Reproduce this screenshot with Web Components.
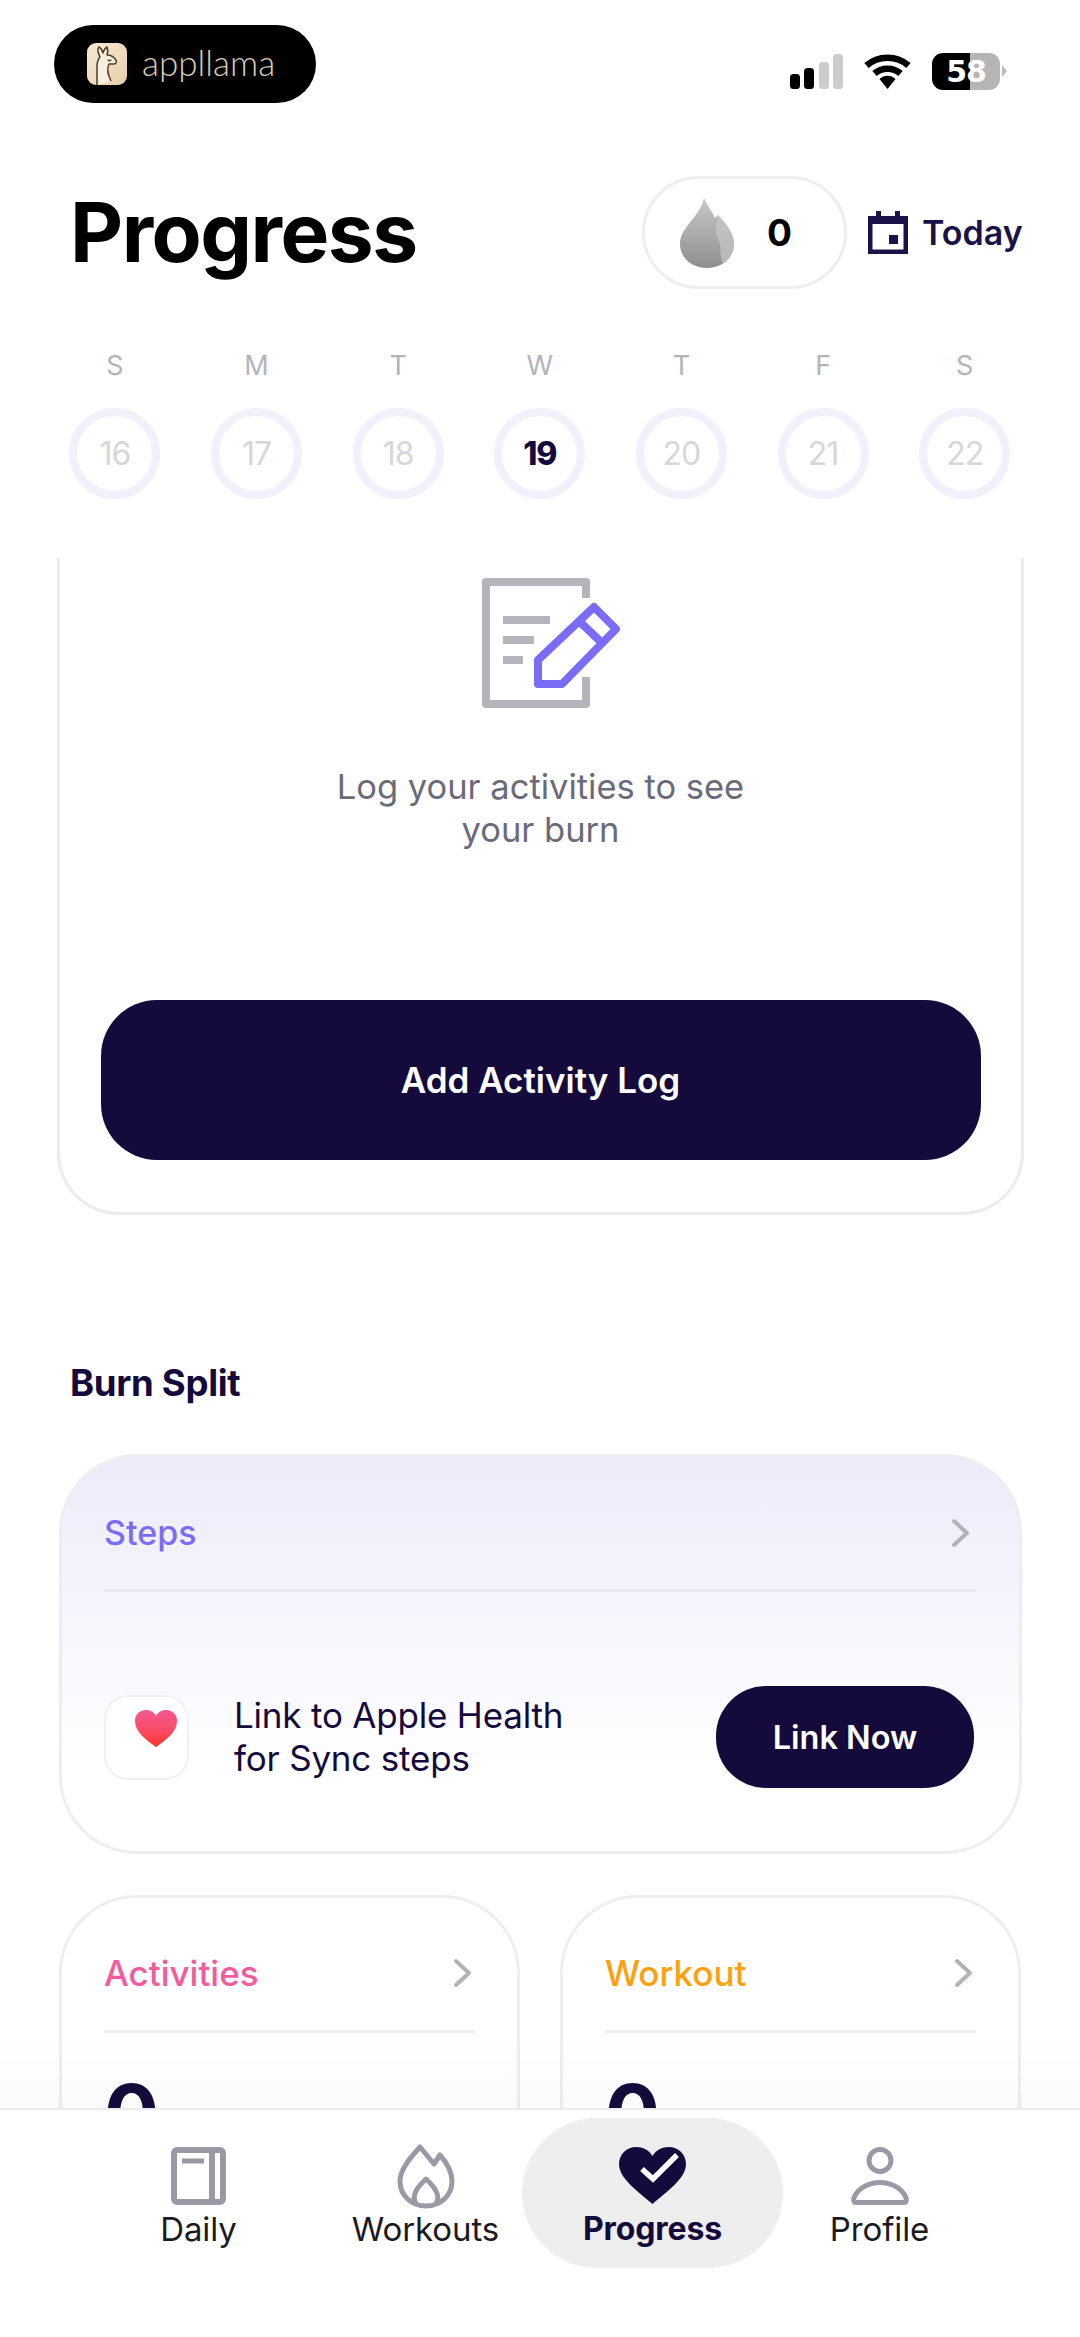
<!DOCTYPE html>
<html lang="en">
<head>
<meta charset="utf-8">
<title>Progress</title>
<style>
  html, body { margin: 0; padding: 0; background: #fff; }
  body {
    width: 1080px;
    height: 2337px;
    overflow: hidden;
    display: flex;
    flex-direction: column;
    font-family: 'Inter', 'Noto Sans', sans-serif;
    color: #140b3c;
  }
</style>
</head>
<body>
  <status-bar></status-bar>
  <page-header>Progress</page-header>
  <week-strip></week-strip>
  <scroll-view>
    <activity-log-card></activity-log-card>
    <section-title>Burn Split</section-title>
    <steps-card></steps-card>
    <div style="display:grid;grid-template-columns:461px 461px;gap:40px;margin:41px 59px 0">
      <stat-card color="#f25c9c">Activities</stat-card>
      <stat-card color="#ff9f0f">Workout</stat-card>
    </div>
  </scroll-view>
  <bottom-nav></bottom-nav>

<script>
const chevron = `<svg width="20" height="30" viewBox="0 0 20 30"><path d="M3 3l13 12L3 27" fill="none" stroke="#b2b2ba" stroke-width="4" stroke-linecap="round" stroke-linejoin="round"/></svg>`

const statusTemplate = document.createElement('template')
statusTemplate.innerHTML = `
  <style>
    :host { display: flex; justify-content: space-between; height: 125px; box-sizing: border-box; padding: 25px 80px 0 54px; }
    .pill {
      display: flex;
      align-items: center;
      gap: 15px;
      box-sizing: border-box;
      width: 262px;
      height: 78px;
      padding-left: 33px;
      border-radius: 39px;
      background: #000;
      color: #d9cdb8;
      font-family: 'Lato', sans-serif;
      font-size: 35px;
      font-weight: 300;
    }
    .pill span { position: relative; top: -2px; }
    .icons { display: flex; align-items: center; height: 37px; margin-top: 28px; gap: 21px; }
    .battery {
      width: 68px;
      height: 37px;
      border-radius: 11px;
      background: linear-gradient(90deg, #000 56%, #b5b5b5 56%);
      color: #fff;
      font: 700 30px/37px 'DejaVu Sans', sans-serif;
      letter-spacing: -1px;
      text-align: center;
      position: relative;
    }
    .battery::after {
      content: '';
      position: absolute;
      left: 70px;
      top: 12px;
      border-left: 5px solid #bbb;
      border-top: 6px solid transparent;
      border-bottom: 6px solid transparent;
    }
  </style>
  <div class="pill">
    <svg width="40" height="42" viewBox="0 0 40 42">
      <defs><linearGradient id="c" x1="0" y1="0" x2="1" y2="1"><stop offset="0" stop-color="#f6e9d6"/><stop offset="1" stop-color="#e9cfa9"/></linearGradient></defs>
      <rect width="40" height="42" rx="9" fill="url(#c)"/>
      <path d="M10 42V24c0-5 1-8 3-10-2-4-3-8-1-10 2 1 3 3 4 6 1-3 2-5 4-6 1 3 1 6 0 8 3 0 7 2 9 5 1 2 0 4-2 4h-5c-2 4-1 11 2 17" fill="#f8eedf" stroke="#4b3d2e" stroke-width="1.5" stroke-linejoin="round"/>
      <path d="M21 17c1 1 2 1 3 0" fill="none" stroke="#4b3d2e" stroke-width="1.3" stroke-linecap="round"/>
    </svg>
    <span>appllama</span>
  </div>
  <div class="icons">
    <svg width="53" height="35" viewBox="0 0 53 35">
      <rect x="0" y="20" width="10" height="15" rx="3.5"/>
      <rect x="14" y="14" width="10" height="21" rx="3.5"/>
      <rect x="29" y="8" width="10" height="27" rx="3.5" fill="#ccc"/>
      <rect x="43" y="0" width="10" height="35" rx="3.5" fill="#ccc"/>
    </svg>
    <svg width="47" height="35" viewBox="0 0 47 35">
      <path d="M2.5 11.5C14 1 33 1 44.5 11.5" fill="none" stroke="#000" stroke-width="6.5"/>
      <path d="M10.5 19.5C17.5 13 29.5 13 36.5 19.5" fill="none" stroke="#000" stroke-width="6.5"/>
      <path d="M15.5 25c4-4.500 12-4.500 16 0L23.500 35z"/>
    </svg>
    <div class="battery">58</div>
  </div>
`

class StatusBar extends HTMLElement {
  constructor() {
    super()
    this.attachShadow({ mode: 'open' })
    this.shadowRoot.appendChild(statusTemplate.content.cloneNode(true))
  }
}

const headerTemplate = document.createElement('template')
headerTemplate.innerHTML = `
  <style>
    :host { display: flex; align-items: center; height: 113px; margin-top: 51px; padding: 0 58px 0 70px; }
    h1 { flex: 1; margin: 0; font-size: 82px; line-height: 115px; font-weight: 700; color: #000; letter-spacing: -1.5px; }
    .drops {
      display: flex;
      align-items: center;
      box-sizing: border-box;
      width: 205px;
      height: 113px;
      padding-left: 35px;
      gap: 33px;
      border: 3px solid #eeeeee;
      border-radius: 57px;
      font-size: 37px;
      font-weight: 700;
      color: #000;
    }
    .today { display: flex; align-items: center; gap: 14px; width: 154px; margin-left: 21px; font-size: 34px; font-weight: 600; color: #1a1248; white-space: nowrap; }
    .today svg { flex: none; }
  </style>
  <h1><slot></slot></h1>
  <div class="drops">
    <svg width="54" height="70" viewBox="0 0 54 70">
      <defs><linearGradient id="d" x1="0" y1="0" x2="0" y2="1"><stop offset="0" stop-color="#c9c9c9"/><stop offset="1" stop-color="#8e8e8e"/></linearGradient></defs>
      <path d="M24 0c3 7 8 13 11 20l3-3c7 8 16 17 16 29 0 14-12 24-27 24S0 60 0 46C0 29 20 19 24 0z" fill="url(#d)"/>
      <path d="M38 17c7 8 16 17 16 29 0 8-4 15-11 20-4-9-1-17-5-25-2-4-3-10 0-24z" fill="#c8c8c8" opacity=".7"/>
    </svg>
    <span>0</span>
  </div>
  <div class="today">
    <svg width="40" height="43" viewBox="0 0 40 43">
      <path d="M8 0h5v5h14V0h5v5h8v38H0V5h8z" fill="#1a1248"/>
      <rect x="4.500" y="13" width="31" height="25.500" fill="#fff"/>
      <rect x="21" y="24" width="9" height="9" fill="#1a1248"/>
    </svg>
    <span>Today</span>
  </div>
`

class PageHeader extends HTMLElement {
  constructor() {
    super()
    this.attachShadow({ mode: 'open' })
    this.shadowRoot.appendChild(headerTemplate.content.cloneNode(true))
  }
}

const dayTemplate = document.createElement('template')
dayTemplate.innerHTML = `
  <style>
    :host { display: flex; flex-direction: column; align-items: center; gap: 21px; }
    .label { font-size: 27px; line-height: 42px; color: #b3b3bb; }
    .ring {
      display: flex;
      align-items: center;
      justify-content: center;
      box-sizing: border-box;
      width: 91px;
      height: 91px;
      border: 8px solid #f1f0fb;
      border-radius: 50%;
      font-size: 32px;
      letter-spacing: -1px;
      color: #d6d6da;
    }
    :host([current]) .ring { color: #140b3c; font-weight: 800; }
  </style>
  <div class="label"></div>
  <div class="ring"><slot></slot></div>
`

class WeekDay extends HTMLElement {
  constructor() {
    super()
    this.attachShadow({ mode: 'open' })
    this.shadowRoot.appendChild(dayTemplate.content.cloneNode(true))
    this.shadowRoot.querySelector('.label').innerText = this.getAttribute('label')
  }
}

const weekTemplate = document.createElement('template')
weekTemplate.innerHTML = `
  <style>
    :host { display: grid; grid-template-columns: repeat(7, 141.67px); padding-left: 44px; margin-top: 56px; }
  </style>
  <week-day label="S">16</week-day>
  <week-day label="M">17</week-day>
  <week-day label="T">18</week-day>
  <week-day label="W" current>19</week-day>
  <week-day label="T">20</week-day>
  <week-day label="F">21</week-day>
  <week-day label="S">22</week-day>
`

class WeekStrip extends HTMLElement {
  constructor() {
    super()
    this.attachShadow({ mode: 'open' })
    this.shadowRoot.appendChild(weekTemplate.content.cloneNode(true))
  }
}

const scrollTemplate = document.createElement('template')
scrollTemplate.innerHTML = `
  <style>
    :host { display: block; position: relative; flex: 1; min-height: 0; margin-top: 59px; overflow: hidden; }
    :host::after {
      content: '';
      position: absolute;
      left: 0;
      right: 0;
      bottom: 0;
      height: 70px;
      background: linear-gradient(rgba(0, 0, 0, 0), rgba(0, 0, 0, 0.02));
    }
  </style>
  <slot></slot>
`

class ScrollView extends HTMLElement {
  constructor() {
    super()
    this.attachShadow({ mode: 'open' })
    this.shadowRoot.appendChild(scrollTemplate.content.cloneNode(true))
  }
}

const logTemplate = document.createElement('template')
logTemplate.innerHTML = `
  <style>
    :host {
      display: flex;
      flex-direction: column;
      align-items: center;
      box-sizing: border-box;
      height: 657px;
      margin: 0 56px 0 57px;
      padding: 12px 41px 0;
      border: 3px solid #ececee;
      border-top: none;
      border-radius: 0 0 62px 62px;
    }
    p { margin: 55px 0 0; width: 500px; text-align: center; font-size: 34.500px; line-height: 43px; color: #6b6a7b; }
    button {
      width: 880px;
      height: 160px;
      margin-top: 149px;
      flex: none;
      border: none;
      border-radius: 56px;
      background: #140b3c;
      color: #fff;
      font: 600 35px 'Inter', sans-serif;
    }
  </style>
  <svg width="160" height="140" viewBox="-10 0 160 140" fill="none">
    <path d="M115 28V12H15v122h100v-27" stroke="#b4b4bc" stroke-width="8" stroke-linejoin="round"/>
    <path d="M32 46h47v8H32zM32 66h31v8H32zM32 86h20v8H32z" fill="#b4b4bc"/>
    <path d="M123 37l22 22-54 55H67V90z M109 52l21 20" stroke="#7b6cf6" stroke-width="8" stroke-linejoin="round"/>
  </svg>
  <p>Log your activities to see<br>your burn</p>
  <button>Add Activity Log</button>
`

class ActivityLogCard extends HTMLElement {
  constructor() {
    super()
    this.attachShadow({ mode: 'open' })
    this.shadowRoot.appendChild(logTemplate.content.cloneNode(true))
  }
}

const titleTemplate = document.createElement('template')
titleTemplate.innerHTML = `
  <style>
    :host { display: block; margin: 146px 70px 49px; font-size: 36.500px; line-height: 44px; font-weight: 700; color: #140b3c; letter-spacing: -0.3px; }
  </style>
  <slot></slot>
`

class SectionTitle extends HTMLElement {
  constructor() {
    super()
    this.attachShadow({ mode: 'open' })
    this.shadowRoot.appendChild(titleTemplate.content.cloneNode(true))
  }
}

const stepsTemplate = document.createElement('template')
stepsTemplate.innerHTML = `
  <style>
    :host {
      display: block;
      box-sizing: border-box;
      height: 400px;
      margin: 0 58px 0 59px;
      padding: 57px 43px 0 42px;
      border: 3px solid #eeeef1;
      border-radius: 78px;
      background: linear-gradient(#ecebfa, #fff 80%);
    }
    .head {
      display: flex;
      align-items: center;
      justify-content: space-between;
      box-sizing: border-box;
      height: 78px;
      padding: 0 5px 38px 0;
      border-bottom: 3px solid #e6e5f3;
      font-size: 34px;
      font-weight: 500;
      color: #7b6cf6;
    }
    .link { display: flex; align-items: center; margin: 94px 2px 0 0; }
    .health {
      display: flex;
      justify-content: flex-end;
      box-sizing: border-box;
      width: 85px;
      height: 85px;
      padding: 13px 10px 0 0;
      border: 2px solid #f1f1f3;
      border-radius: 24px;
      background: #fff;
    }
    p { flex: 1; margin: 0 0 0 45px; font-size: 35px; line-height: 43px; color: #140b3c; letter-spacing: -0.2px; }
    button {
      width: 258px;
      height: 102px;
      flex: none;
      border: none;
      border-radius: 50px;
      background: #140b3c;
      color: #fff;
      font: 600 32.500px 'Inter', sans-serif;
    }
  </style>
  <div class="head"><span>Steps</span>${chevron}</div>
  <div class="link">
    <div class="health">
      <svg width="42" height="37" viewBox="0 0 42 37">
        <defs><linearGradient id="h" x1="0" y1="0" x2="0" y2="1"><stop offset="0" stop-color="#f2588f"/><stop offset=".6" stop-color="#fb4a62"/><stop offset="1" stop-color="#ff3326"/></linearGradient></defs>
        <path d="M21 37C11 30 0 22 0 11 0 4 5 0 11 0c4 0 8 2 10 6 2-4 6-6 10-6 6 0 11 4 11 11 0 11-11 19-21 26z" fill="url(#h)"/>
      </svg>
    </div>
    <p>Link to Apple Health<br>for Sync steps</p>
    <button>Link Now</button>
  </div>
`

class StepsCard extends HTMLElement {
  constructor() {
    super()
    this.attachShadow({ mode: 'open' })
    this.shadowRoot.appendChild(stepsTemplate.content.cloneNode(true))
  }
}

const statTemplate = document.createElement('template')
statTemplate.innerHTML = `
  <style>
    :host {
      display: block;
      box-sizing: border-box;
      height: 400px;
      padding: 57px 42px 0 42px;
      border: 3px solid #eeeef1;
      border-radius: 78px;
    }
    .head {
      display: flex;
      align-items: center;
      justify-content: space-between;
      box-sizing: border-box;
      height: 78px;
      padding: 0 2px 39px 0;
      border-bottom: 3px solid #efeff1;
      font-size: 35px;
      font-weight: 500;
      color: var(--title-color);
    }
    .value { margin-top: 32px; font-size: 82px; line-height: 100px; font-weight: 700; color: #140b3c; }
  </style>
  <div class="head"><span><slot></slot></span>${chevron}</div>
  <div class="value">0</div>
`

class StatCard extends HTMLElement {
  constructor() {
    super()
    this.attachShadow({ mode: 'open' })
    this.shadowRoot.appendChild(statTemplate.content.cloneNode(true))
    this.style.setProperty('--title-color', this.getAttribute('color'))
  }
}

const tabTemplate = document.createElement('template')
tabTemplate.innerHTML = `
  <style>
    :host {
      display: flex;
      flex-direction: column;
      align-items: center;
      height: 150px;
      padding-top: 24px;
      box-sizing: border-box;
      font-size: 33px;
      color: #1b1b1f;
    }
    :host([active]) { margin: 0 -17px; border-radius: 75px; background: #eeeeef; color: #140b3c; font-size: 32px; font-weight: 700; }
    .icon { display: flex; align-items: center; height: 68px; }
    .name { line-height: 44px; margin-top: -3px; letter-spacing: -0.1px; }
  </style>
  <div class="icon"><slot name="icon"></slot></div>
  <div class="name"><slot></slot></div>
`

class NavTab extends HTMLElement {
  constructor() {
    super()
    this.attachShadow({ mode: 'open' })
    this.shadowRoot.appendChild(tabTemplate.content.cloneNode(true))
  }
}

const navTemplate = document.createElement('template')
navTemplate.innerHTML = `
  <style>
    :host {
      display: grid;
      grid-template-columns: repeat(4, 227px);
      align-content: start;
      box-sizing: border-box;
      height: 229px;
      padding: 8px 0 0 85px;
      border-top: 2px solid #ececee;
      background: #fff;
    }
  </style>
  <nav-tab>
    <svg slot="icon" width="55" height="58" viewBox="0 0 55 58" fill="none" stroke="#9a99a5" stroke-width="6">
      <rect x="3" y="3" width="49" height="52" rx="3"/>
      <path d="M41 3v52"/>
      <path d="M11 14h22" stroke-width="5"/>
    </svg>
    Daily
  </nav-tab>
  <nav-tab>
    <svg slot="icon" width="58" height="66" viewBox="0 0 58 66" fill="none" stroke="#9a99a5" stroke-width="5" stroke-linejoin="round">
      <path d="M23 4l14 17 6-9c7 8 12 18 12 26 0 14-11 25-26 25S3 52 3 38C3 26 14 14 23 4z"/>
      <path d="M19 61c-5-8 0-16 10-25 10 9 15 17 10 25"/>
    </svg>
    Workouts
  </nav-tab>
  <nav-tab active>
    <svg slot="icon" width="67" height="58" viewBox="0 0 67 58">
      <path d="M33.500 57C20 45 0 32 0 17 0 7 8 0 17 0c7 0 13 3 16.500 9C37 3 43 0 50 0c9 0 17 7 17 17 0 15-20 28-33.500 40z" fill="#140b3c"/>
      <path d="M23 22l11 10 24-24" fill="none" stroke="#fff" stroke-width="5.500"/>
    </svg>
    Progress
  </nav-tab>
  <nav-tab>
    <svg slot="icon" width="58" height="58" viewBox="0 0 58 58" fill="none" stroke="#9a99a5" stroke-width="5">
      <circle cx="29" cy="13.500" r="11"/>
      <path d="M5 55.500H53C55.500 55.500 55.500 53 55 51 52 42 41 35.500 29 35.500S6 42 3 51C2.500 53 2.500 55.500 5 55.500z" stroke-linejoin="round"/>
    </svg>
    Profile
  </nav-tab>
`

class BottomNav extends HTMLElement {
  constructor() {
    super()
    this.attachShadow({ mode: 'open' })
    this.shadowRoot.appendChild(navTemplate.content.cloneNode(true))
  }
}

window.customElements.define('status-bar', StatusBar)
window.customElements.define('page-header', PageHeader)
window.customElements.define('week-day', WeekDay)
window.customElements.define('week-strip', WeekStrip)
window.customElements.define('scroll-view', ScrollView)
window.customElements.define('activity-log-card', ActivityLogCard)
window.customElements.define('section-title', SectionTitle)
window.customElements.define('steps-card', StepsCard)
window.customElements.define('stat-card', StatCard)
window.customElements.define('nav-tab', NavTab)
window.customElements.define('bottom-nav', BottomNav)
</script>
</body>
</html>
